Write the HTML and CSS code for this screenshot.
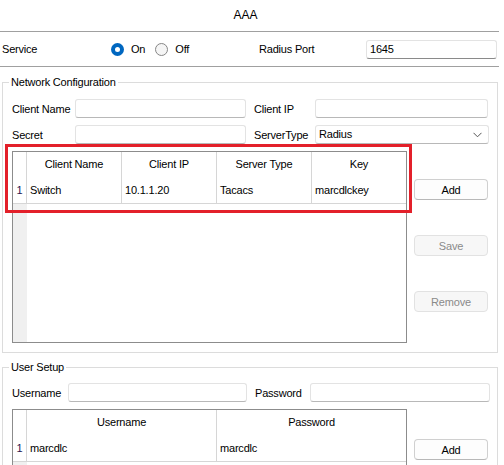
FILE: index.html
```html
<!DOCTYPE html>
<html>
<head>
<meta charset="utf-8">
<link rel="stylesheet" href="styles.css">
</head>
<body>
<div class="page">
  <div class="title">AAA</div>
  <div class="service-row">
    <span class="service-lbl">Service</span>
    <div class="radios">
      <span class="radio on"></span><span class="radio-text">On</span>
      <span class="radio off"></span><span class="radio-text">Off</span>
    </div>
    <span class="port-lbl">Radius Port</span>
    <div class="field port-input">1645</div>
  </div>

  <fieldset class="group net">
    <legend>Network Configuration</legend>
    <div class="form-row">
      <span class="lbl w-cn">Client Name</span>
      <div class="field w-in1"></div>
      <span class="lbl w-ip">Client IP</span>
      <div class="field w-in2"></div>
    </div>
    <div class="form-row">
      <span class="lbl w-cn">Secret</span>
      <div class="field w-in1"></div>
      <span class="lbl w-ip">ServerType</span>
      <div class="field select w-in2">
        <span>Radius</span>
        <svg class="chev" width="9" height="6" viewBox="0 0 9 6"><path d="M0.5 0.8 L4.5 4.8 L8.5 0.8" fill="none" stroke="#555" stroke-width="1"/></svg>
      </div>
    </div>
    <div class="table-area">
      <div class="table net-table">
        <div class="c rh"></div>
        <div class="c hd">Client Name</div>
        <div class="c hd">Client IP</div>
        <div class="c hd">Server Type</div>
        <div class="c hd last">Key</div>
        <div class="c rh num row">1</div>
        <div class="c row">Switch</div>
        <div class="c row">10.1.1.20</div>
        <div class="c row">Tacacs</div>
        <div class="c row last">marcdlckey</div>
        <div class="c rh fill"></div>
        <div class="c empty"></div>
      </div>
      <div class="btn-col net-btns">
        <div class="btn">Add</div>
        <div class="btn disabled">Save</div>
        <div class="btn disabled">Remove</div>
      </div>
    </div>
  </fieldset>

  <fieldset class="group user">
    <legend>User Setup</legend>
    <div class="form-row">
      <span class="lbl w-un">Username</span>
      <div class="field w-in3"></div>
      <span class="lbl w-pw">Password</span>
      <div class="field w-in4"></div>
    </div>
    <div class="table-area">
      <div class="table user-table">
        <div class="c rh"></div>
        <div class="c hd">Username</div>
        <div class="c hd last">Password</div>
        <div class="c rh num row">1</div>
        <div class="c row">marcdlc</div>
        <div class="c row last">marcdlc</div>
        <div class="c rh fill"></div>
        <div class="c empty"></div>
      </div>
      <div class="btn-col user-btns">
        <div class="btn">Add</div>
      </div>
    </div>
  </fieldset>

  <div class="highlight"></div>
</div>
</body>
</html>
```

FILE: styles.css
```css
* { box-sizing: border-box; }
html, body {
  margin: 0;
  padding: 0;
  background: #ffffff;
  overflow: hidden;
}
body {
  font-family: "Liberation Sans", Arial, sans-serif;
  font-size: 11px;
  letter-spacing: -0.2px;
  color: #000;
}
.page {
  position: relative;
  width: 499px;
  height: 465px;
  overflow: hidden;
}
.title {
  height: 32px;
  border-bottom: 1px solid #a0a0a0;
  text-align: center;
  font-size: 12px;
  letter-spacing: 0;
  line-height: 30px;
  padding-right: 8px;
}
.service-row {
  height: 35px;
  border-bottom: 1px solid #a0a0a0;
  display: flex;
  align-items: center;
}
.service-lbl { width: 111px; padding-left: 2px; }
.radios {
  width: 148px;
  display: flex;
  align-items: center;
}
.radio {
  width: 13px;
  height: 13px;
  border-radius: 50%;
  flex: none;
}
.radio.on {
  background: #0067c0;
  position: relative;
}
.radio.on::after {
  content: "";
  position: absolute;
  left: 4px;
  top: 4px;
  width: 5px;
  height: 5px;
  border-radius: 50%;
  background: #fff;
}
.radio.off {
  border: 1px solid #868686;
  background: #f5f5f5;
}
.radio-text { margin-left: 7px; margin-right: 10px; }
.port-lbl { width: 107px; }
.field {
  height: 19px;
  background: #fff;
  border: 1px solid #e3e3e3;
  border-bottom-color: #b8b8b8;
  border-radius: 3px;
  padding-left: 3px;
  line-height: 17px;
  display: flex;
  align-items: center;
}
.port-input { width: 131px; border-bottom-color: #8a8a8a; }

.group {
  margin: 8px 0 0 2px;
  width: 496px;
  border: 1px solid #dcdcdc;
  padding: 0 0 0 9px;
  min-width: 0;
}
.group legend {
  margin-left: -3px;
  padding: 0 2px;
  line-height: 14px;
  font-size: 11px;
}
.net { padding-top: 10px; padding-bottom: 9px; }
.user { margin-top: 7px; padding-top: 9px; height: 120px; }

.form-row {
  display: flex;
  align-items: center;
  height: 19px;
  margin-bottom: 7px;
}
.lbl { flex: none; }
.w-cn { width: 63px; }
.w-in1 { width: 171px; }
.w-ip { width: 61px; margin-left: 8px; }
.w-in2 { width: 173px; }
.w-un { width: 56px; }
.w-in3 { width: 179px; }
.w-pw { width: 55px; margin-left: 8px; }
.w-in4 { width: 180px; }
.select {
  justify-content: space-between;
  padding-right: 6px;
  width: 174px;
}
.chev { display: block; }

.table-area {
  display: flex;
  align-items: flex-start;
}
.table {
  width: 395px;
  border: 1px solid #8c8c8c;
  display: grid;
  background: #fff;
}
.net-table {
  height: 192px;
  grid-template-columns: 14px 95px 95px 95px 94px;
  grid-template-rows: 24px 28px 1fr;
}
.user-table {
  height: 160px;
  grid-template-columns: 14px 190px 189px;
  grid-template-rows: 24px 28px 1fr;
}
.c {
  border-right: 1px solid #d6d6d6;
  display: flex;
  align-items: center;
  white-space: nowrap;
}
.c.last { border-right: none; }
.hd { justify-content: center; }
.row { border-bottom: 1px solid #d6d6d6; padding-left: 3px; }
.num { justify-content: center; padding-left: 0; color: #2a1450; }
.rh.fill { background: #f0f0f0; border-right: none; }
.empty { grid-column: 2 / -1; border-right: none; }

.btn-col {
  margin-left: 7px;
  display: flex;
  flex-direction: column;
  gap: 35px;
}
.net-btns { padding-top: 28px; }
.user-btns { padding-top: 30px; }
.btn {
  width: 74px;
  height: 21px;
  border: 1px solid #d0d0d0;
  border-bottom-color: #b8b8b8;
  border-radius: 4px;
  background: #fdfdfd;
  display: flex;
  align-items: center;
  justify-content: center;
}
.btn.disabled {
  color: #8a8a8a;
  background: #f7f7f7;
  border-color: #e2e2e2;
}

.highlight {
  position: absolute;
  left: 5px;
  top: 144px;
  width: 407px;
  height: 69px;
  border: 3px solid #e3202a;
  pointer-events: none;
}
```
